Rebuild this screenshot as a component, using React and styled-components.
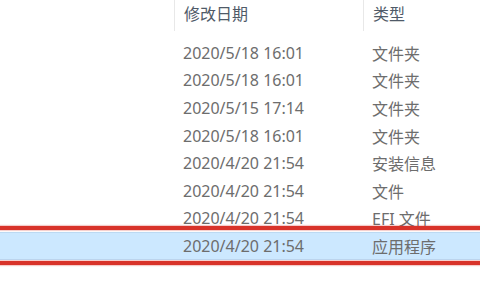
import React from 'react'
import styled, { createGlobalStyle } from 'styled-components'

const files = [
  { date: '2020/5/18 16:01', type: '文件夹' },
  { date: '2020/5/18 16:01', type: '文件夹' },
  { date: '2020/5/15 17:14', type: '文件夹' },
  { date: '2020/5/18 16:01', type: '文件夹' },
  { date: '2020/4/20 21:54', type: '安装信息' },
  { date: '2020/4/20 21:54', type: '文件' },
  { date: '2020/4/20 21:54', type: 'EFI 文件' },
  { date: '2020/4/20 21:54', type: '应用程序', selected: true },
]

const GlobalStyle = createGlobalStyle`
  html, body {
    margin: 0;
    padding: 0;
    background: #ffffff;
  }
  body {
    font-family: "Noto Sans", "Noto Sans CJK SC", sans-serif;
    overflow: hidden;
  }
`

const App = () => {
  return (
    <>
      <GlobalStyle />
      <Explorer>
        <Header>
          <HeadCell />
          <HeadCell divided>修改日期</HeadCell>
          <HeadCell divided>类型</HeadCell>
        </Header>
        <List>
          {files.map((f, i) => (
            <Row key={i} selected={f.selected}>
              <Cell />
              <Cell>{f.date}</Cell>
              <Cell>{f.type}</Cell>
              {f.selected && <Marker />}
            </Row>
          ))}
        </List>
      </Explorer>
    </>
  )
}

const Explorer = styled.div`
  width: 480px;
  height: 300px;
  overflow: hidden;
  background: #fff;
`

const Header = styled.div`
  display: grid;
  grid-template-columns: 174px 189px 1fr;
  height: 31px;
`

const HeadCell = styled.div`
  display: flex;
  align-items: center;
  padding: 0 0 6px 9px;
  font-size: 16px;
  color: #4f5a68;
  border-left: ${p => (p.divided ? '1px solid #e8e8e8' : 'none')};
`

const List = styled.div`
  display: flex;
  flex-direction: column;
  padding-top: 8px;
`

const Row = styled.div`
  position: relative;
  display: grid;
  grid-template-columns: 175px 189px 1fr;
  height: 27.6px;
  box-sizing: border-box;
  align-items: center;
  background: ${p => (p.selected ? '#cce8ff' : 'transparent')};
  border-top: 1px solid ${p => (p.selected ? '#bcd9f2' : 'transparent')};
  border-bottom: 1px solid ${p => (p.selected ? '#bcd9f2' : 'transparent')};
`

const Cell = styled.div`
  padding-left: 8px;
  font-size: 16px;
  color: #6d6d6d;
  white-space: nowrap;
`

const Marker = styled.div`
  position: absolute;
  left: -10px;
  right: -10px;
  top: -7px;
  bottom: -6px;
  border: 4.5px solid #d8332a;
  box-shadow: 0 0 1px 1px rgba(216, 51, 42, 0.25), inset 0 0 1px 1px rgba(216, 51, 42, 0.25);
  pointer-events: none;
`

export default App
